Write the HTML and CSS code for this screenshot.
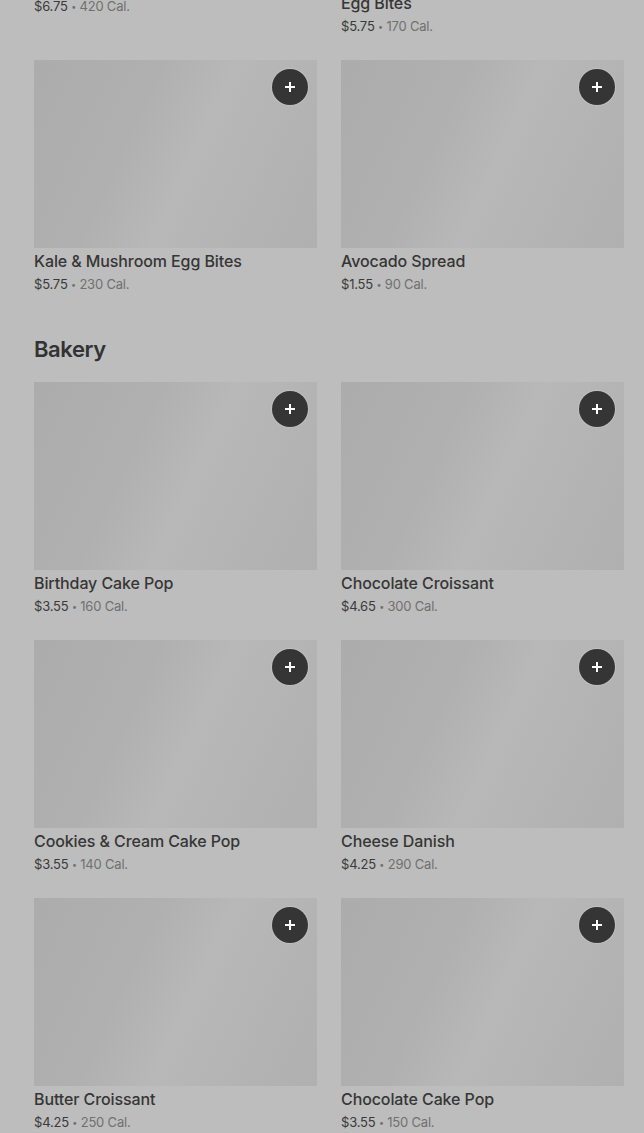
FILE: index.html
```html
<!DOCTYPE html>
<html lang="en">
<head>
<meta charset="utf-8">
<title>Menu</title>
<link rel="stylesheet" href="styles.css">
</head>
<body>
<main class="menu">
  <section class="section section-first">
    <div class="grid">
      <article class="card">
        <div class="thumb"><button class="add" aria-label="Add"><svg viewBox="0 0 16 16" width="16" height="16"><path d="M8 3v10M3 8h10" stroke="#fff" stroke-width="2"/></svg></button></div>
        <h3 class="name">Impossible Breakfast Sandwich</h3>
        <p class="meta"><span class="price">$6.75</span> <span class="dot">•</span> 420 Cal.</p>
      </article>
      <article class="card">
        <div class="thumb"><button class="add" aria-label="Add"><svg viewBox="0 0 16 16" width="16" height="16"><path d="M8 3v10M3 8h10" stroke="#fff" stroke-width="2"/></svg></button></div>
        <h3 class="name">Egg White &amp; Roasted Red Pepper Egg&nbsp;Bites</h3>
        <p class="meta"><span class="price">$5.75</span> <span class="dot">•</span> 170 Cal.</p>
      </article>
      <article class="card">
        <div class="thumb"><button class="add" aria-label="Add"><svg viewBox="0 0 16 16" width="16" height="16"><path d="M8 3v10M3 8h10" stroke="#fff" stroke-width="2"/></svg></button></div>
        <h3 class="name">Kale &amp; Mushroom Egg Bites</h3>
        <p class="meta"><span class="price">$5.75</span> <span class="dot">•</span> 230 Cal.</p>
      </article>
      <article class="card">
        <div class="thumb"><button class="add" aria-label="Add"><svg viewBox="0 0 16 16" width="16" height="16"><path d="M8 3v10M3 8h10" stroke="#fff" stroke-width="2"/></svg></button></div>
        <h3 class="name">Avocado Spread</h3>
        <p class="meta"><span class="price">$1.55</span> <span class="dot">•</span> 90 Cal.</p>
      </article>
    </div>
  </section>

  <section class="section">
    <h2 class="section-title">Bakery</h2>
    <div class="grid">
      <article class="card">
        <div class="thumb"><button class="add" aria-label="Add"><svg viewBox="0 0 16 16" width="16" height="16"><path d="M8 3v10M3 8h10" stroke="#fff" stroke-width="2"/></svg></button></div>
        <h3 class="name">Birthday Cake Pop</h3>
        <p class="meta"><span class="price">$3.55</span> <span class="dot">•</span> 160 Cal.</p>
      </article>
      <article class="card">
        <div class="thumb"><button class="add" aria-label="Add"><svg viewBox="0 0 16 16" width="16" height="16"><path d="M8 3v10M3 8h10" stroke="#fff" stroke-width="2"/></svg></button></div>
        <h3 class="name">Chocolate Croissant</h3>
        <p class="meta"><span class="price">$4.65</span> <span class="dot">•</span> 300 Cal.</p>
      </article>
      <article class="card">
        <div class="thumb"><button class="add" aria-label="Add"><svg viewBox="0 0 16 16" width="16" height="16"><path d="M8 3v10M3 8h10" stroke="#fff" stroke-width="2"/></svg></button></div>
        <h3 class="name">Cookies &amp; Cream Cake Pop</h3>
        <p class="meta"><span class="price">$3.55</span> <span class="dot">•</span> 140 Cal.</p>
      </article>
      <article class="card">
        <div class="thumb"><button class="add" aria-label="Add"><svg viewBox="0 0 16 16" width="16" height="16"><path d="M8 3v10M3 8h10" stroke="#fff" stroke-width="2"/></svg></button></div>
        <h3 class="name">Cheese Danish</h3>
        <p class="meta"><span class="price">$4.25</span> <span class="dot">•</span> 290 Cal.</p>
      </article>
      <article class="card">
        <div class="thumb"><button class="add" aria-label="Add"><svg viewBox="0 0 16 16" width="16" height="16"><path d="M8 3v10M3 8h10" stroke="#fff" stroke-width="2"/></svg></button></div>
        <h3 class="name">Butter Croissant</h3>
        <p class="meta"><span class="price">$4.25</span> <span class="dot">•</span> 250 Cal.</p>
      </article>
      <article class="card">
        <div class="thumb"><button class="add" aria-label="Add"><svg viewBox="0 0 16 16" width="16" height="16"><path d="M8 3v10M3 8h10" stroke="#fff" stroke-width="2"/></svg></button></div>
        <h3 class="name">Chocolate Cake Pop</h3>
        <p class="meta"><span class="price">$3.55</span> <span class="dot">•</span> 150 Cal.</p>
      </article>
    </div>
  </section>
</main>
</body>
</html>
```

FILE: styles.css
```css
html, body {
  margin: 0;
  padding: 0;
  background: #bdbdbd;
  overflow: hidden;
  height: 100%;
}

body {
  font-family: Inter, "Noto Sans", "Liberation Sans", sans-serif;
  color: #333;
}

.menu {
  padding: 0 20px 0 34px;
  margin-top: -218px;
}

.section + .section {
  margin-top: 42px;
}

.section-title {
  margin: 0 0 19px;
  font-size: 22px;
  line-height: 28px;
  font-weight: 600;
  color: #333;
  letter-spacing: -0.4px;
}

.grid {
  display: grid;
  grid-template-columns: 283px 283px;
  column-gap: 24px;
  row-gap: 25px;
}

.card {
  display: flex;
  flex-direction: column;
}

.thumb {
  position: relative;
  height: 188px;
  background: linear-gradient(115deg, #acacac 0%, #b0b0b0 35%, #b8b8b8 55%, #b3b3b3 80%, #b0b0b0 100%);
}

.add {
  position: absolute;
  top: 9px;
  right: 9px;
  width: 36px;
  height: 36px;
  border-radius: 50%;
  border: none;
  padding: 0;
  background: #353535;
  box-shadow: 0 0 0 1px rgba(200, 200, 200, 0.6);
  display: flex;
  align-items: center;
  justify-content: center;
}

.add svg {
  display: block;
}

.name {
  margin: 3px 0 0;
  font-size: 16px;
  line-height: 20px;
  font-weight: 500;
  color: #363636;
  letter-spacing: -0.1px;
}

.meta {
  margin: 4px 0 0;
  font-size: 13px;
  line-height: 18px;
  height: 18px;
  color: #707070;
  letter-spacing: -0.2px;
}

.price {
  color: #3a3a3a;
}

.dot {
  font-size: 9px;
  line-height: 0;
  vertical-align: 1px;
}
```
